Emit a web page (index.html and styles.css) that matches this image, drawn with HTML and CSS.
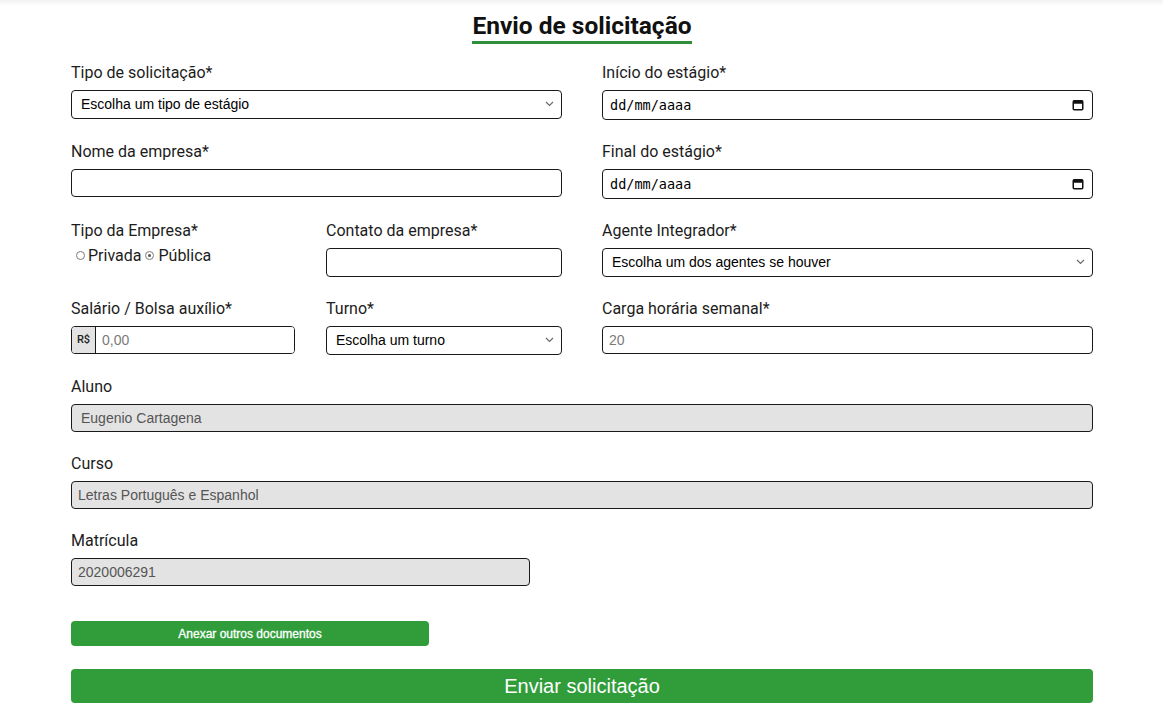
FILE: index.html
```html
<!DOCTYPE html>
<html lang="pt-BR">
<head>
<meta charset="utf-8">
<title>Envio de solicitação</title>
<link rel="stylesheet" href="styles.css">
</head>
<body>
<div class="topshade"></div>
<main class="page">
  <div class="title-wrap"><h1 class="title">Envio de solicitação</h1></div>
  <form class="form">
    <div class="row two">
      <div class="field">
        <label class="lbl">Tipo de solicitação*</label>
        <div class="ctl sel"><span>Escolha um tipo de estágio</span><svg class="chev" width="9" height="6" viewBox="0 0 9 6"><polyline points="1,1 4.5,4.5 8,1" fill="none" stroke="#6b6b6b" stroke-width="1.2"/></svg></div>
      </div>
      <div class="field">
        <label class="lbl">Início do estágio*</label>
        <div class="ctl date"><span>dd/mm/aaaa</span><svg class="cal" width="12" height="12" viewBox="0 0 12 12"><rect x="1.25" y="1.75" width="9.5" height="9" rx="1" fill="none" stroke="#111" stroke-width="1.5"/><rect x="1.25" y="1.75" width="9.5" height="3" fill="#111"/></svg></div>
      </div>
    </div>

    <div class="row two">
      <div class="field">
        <label class="lbl">Nome da empresa*</label>
        <input class="ctl inp" type="text">
      </div>
      <div class="field">
        <label class="lbl">Final do estágio*</label>
        <div class="ctl date"><span>dd/mm/aaaa</span><svg class="cal" width="12" height="12" viewBox="0 0 12 12"><rect x="1.25" y="1.75" width="9.5" height="9" rx="1" fill="none" stroke="#111" stroke-width="1.5"/><rect x="1.25" y="1.75" width="9.5" height="3" fill="#111"/></svg></div>
      </div>
    </div>

    <div class="row two">
      <div class="split">
        <div class="field">
          <label class="lbl lbl-tight">Tipo da Empresa*</label>
          <div class="radios">
            <span class="radio"><span class="dot"></span>Privada</span>
            <span class="radio"><span class="dot on"><span class="pip"></span></span>Pública</span>
          </div>
        </div>
        <div class="field">
          <label class="lbl">Contato da empresa*</label>
          <input class="ctl inp tall" type="text">
        </div>
      </div>
      <div class="field">
        <label class="lbl">Agente Integrador*</label>
        <div class="ctl sel"><span>Escolha um dos agentes se houver</span><svg class="chev" width="9" height="6" viewBox="0 0 9 6"><polyline points="1,1 4.5,4.5 8,1" fill="none" stroke="#6b6b6b" stroke-width="1.2"/></svg></div>
      </div>
    </div>

    <div class="row two">
      <div class="split">
        <div class="field">
          <label class="lbl">Salário / Bolsa auxílio*</label>
          <div class="group">
            <span class="addon">R$</span>
            <input class="group-inp" type="text" placeholder="0,00">
          </div>
        </div>
        <div class="field">
          <label class="lbl">Turno*</label>
          <div class="ctl sel"><span>Escolha um turno</span><svg class="chev" width="9" height="6" viewBox="0 0 9 6"><polyline points="1,1 4.5,4.5 8,1" fill="none" stroke="#6b6b6b" stroke-width="1.2"/></svg></div>
        </div>
      </div>
      <div class="field">
        <label class="lbl">Carga horária semanal*</label>
        <input class="ctl inp pad6" type="text" placeholder="20">
      </div>
    </div>

    <div class="row">
      <label class="lbl">Aluno</label>
      <input class="ctl inp dis" type="text" value="Eugenio Cartagena" readonly>
    </div>

    <div class="row">
      <label class="lbl">Curso</label>
      <input class="ctl inp dis pad6" type="text" value="Letras Português e Espanhol" readonly>
    </div>

    <div class="row">
      <label class="lbl">Matrícula</label>
      <input class="ctl inp dis pad6 narrow" type="text" value="2020006291" readonly>
    </div>

    <button type="button" class="btn btn-attach">Anexar outros documentos</button>
    <button type="button" class="btn btn-send">Enviar solicitação</button>
  </form>
</main>
</body>
</html>
```

FILE: styles.css
```css
html, body {
  margin: 0;
  background: #ffffff;
}

body {
  font-family: Roboto, "Noto Sans", sans-serif;
  color: #1c1c1c;
}

.topshade {
  height: 6px;
  background: linear-gradient(#f2f2f2, #ffffff);
}

.page {
  padding: 0 70px 0 71px;
}

.title-wrap {
  display: flex;
  justify-content: center;
  margin-top: 6px;
  margin-bottom: 19px;
}

.title {
  margin: 0;
  font-size: 24.5px;
  line-height: 28px;
  font-weight: 700;
  color: #111111;
  padding-bottom: 1px;
  border-bottom: 3px solid #2f8f3a;
}

.form {
  margin: 0;
}

.row {
  margin-bottom: 22.5px;
}

.two {
  display: grid;
  grid-template-columns: 1fr 1fr;
  column-gap: 40px;
}

.split {
  display: grid;
  grid-template-columns: 224px 236px;
  column-gap: 31px;
}

.lbl {
  display: block;
  font-size: 16px;
  line-height: 19px;
  margin-bottom: 7.5px;
  color: #1c1c1c;
}

.lbl-tight {
  margin-bottom: 6px;
}

.ctl {
  box-sizing: border-box;
  display: flex;
  align-items: center;
  width: 100%;
  height: 28px;
  margin: 0;
  padding: 0 9px;
  border: 1px solid #1a1a1a;
  border-radius: 4px;
  background: #ffffff;
  font-family: "Liberation Sans", Arial, sans-serif;
  font-size: 14px;
  color: #000000;
}

.inp {
  display: block;
  outline: none;
}

.inp::placeholder,
.group-inp::placeholder {
  color: #7a7a7a;
}

.tall {
  height: 29px;
}

.pad6 {
  padding-left: 6px;
}

.sel {
  height: 29px;
  justify-content: space-between;
  padding-right: 7px;
}

.chev {
  flex: none;
}

.date {
  height: 30px;
  justify-content: space-between;
  padding: 0 8px 0 7px;
  font-family: "DejaVu Sans Mono", "Liberation Mono", monospace;
  font-size: 13.5px;
  letter-spacing: 0;
}

.cal {
  flex: none;
}

.dis {
  background: #e3e3e3;
  color: #555555;
}

.narrow {
  width: 459px;
}

.radios {
  display: flex;
  align-items: center;
  height: 19px;
  font-size: 16px;
  line-height: 19px;
  color: #1c1c1c;
}

.radio {
  display: flex;
  align-items: center;
  margin-right: 4px;
}

.dot {
  box-sizing: border-box;
  display: flex;
  align-items: center;
  justify-content: center;
  width: 9px;
  height: 9px;
  margin-left: 5px;
  margin-right: 3px;
  border: 1px solid #7a7a7a;
  border-radius: 50%;
  background: #ffffff;
}

.radio + .radio .dot {
  margin-left: 0;
  margin-right: 4px;
}

.pip {
  width: 3px;
  height: 3px;
  border-radius: 50%;
  background: #555555;
}

.group {
  box-sizing: border-box;
  display: flex;
  height: 28px;
  border: 1px solid #1a1a1a;
  border-radius: 4px;
  overflow: hidden;
  background: #ffffff;
}

.addon {
  display: flex;
  align-items: center;
  justify-content: center;
  width: 23px;
  flex: none;
  background: #e3e3e3;
  border-right: 1px solid #1a1a1a;
  font-family: Roboto, sans-serif;
  font-size: 11px;
  font-weight: 500;
  color: #222222;
}

.group-inp {
  flex: 1;
  min-width: 0;
  border: 0;
  outline: none;
  padding: 0 6px;
  font-family: "Liberation Sans", Arial, sans-serif;
  font-size: 14px;
  background: #ffffff;
}

.btn {
  display: block;
  box-sizing: border-box;
  padding: 0;
  border: 0;
  border-radius: 4px;
  background: #309d3a;
  color: #ffffff;
  font-family: "Liberation Sans", Arial, sans-serif;
  cursor: pointer;
}

.btn-attach {
  width: 358px;
  height: 25px;
  margin-top: 35.5px;
  font-size: 12px;
  -webkit-text-stroke: 0.3px #ffffff;
}

.btn-send {
  width: 100%;
  height: 34px;
  margin-top: 23px;
  font-size: 20px;
}
```
